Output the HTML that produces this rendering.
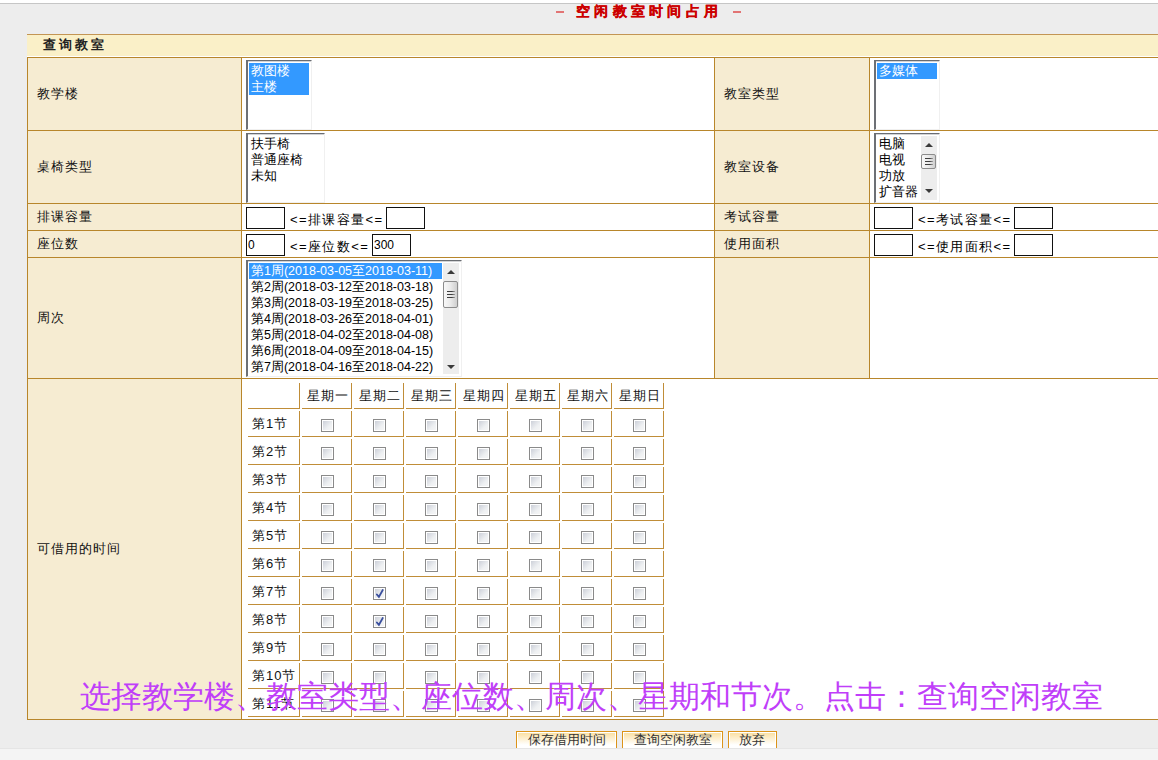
<!DOCTYPE html>
<html><head><meta charset="utf-8">
<style>
*{box-sizing:border-box;margin:0;padding:0}
html,body{width:1158px;height:760px;overflow:hidden}
body{position:relative;background:#ededed;font-family:"Liberation Sans",sans-serif;font-size:12px;color:#000}
.lt,.txt,.th,.tr,.btn{-webkit-text-stroke:0px currentColor}
.title{-webkit-text-stroke:0.3px currentColor}
.a{position:absolute}
.topw{left:0;top:0;width:1158px;height:3px;background:#fff}
.topl{left:0;top:3px;width:1158px;height:1px;background:#c6c6c6}
.bot{left:0;top:748px;width:1158px;height:12px;background:#f4f4f4;border-top:1px solid #e5e5e5}
.title{top:4px;height:14px;line-height:14px;font-size:14px;font-weight:bold;color:#cc0000;letter-spacing:4.3px;white-space:nowrap}
.dash{top:11px;width:8px;height:2px;background:#e27474}
.hdr{left:27px;top:34px;width:1140px;height:22px;border-top:1px solid #c39554;background:#faf0c8}
.hdrt{left:43px;top:38px;line-height:14px;font-size:13px;font-weight:bold;letter-spacing:3px;color:#222}
.hl{height:1px;background:#b8862b}
.vl{width:1px;background:#b8862b}
.lab{background:#f6ecd2}
.wht{background:#fff}
.lt{display:flex;align-items:center;font-size:13px;letter-spacing:1px;white-space:nowrap;color:#111}
.sel{background:#fff;border-top:1px solid #6a6d72;box-shadow:inset 0 1px 0 #d2d3d5;border-left:2px solid #6d7075;border-right:1px solid #f0f0f0;border-bottom:1px solid #f0f0f0;overflow:hidden}
.opt{height:16px;line-height:16px;font-size:12.5px;padding-left:2px;white-space:nowrap}
.on{background:#3399ff;color:#fff}
.inp{width:39px;height:22px;border:1px solid #111;background:#fff;line-height:20px;padding-left:1px;font-size:12px}
.txt{font-size:13px;letter-spacing:1.4px;white-space:nowrap;line-height:14px}
.opts{position:absolute;left:1px;top:2px}
.sb{background:#ededed}
.up{width:0;height:0;border-left:4px solid transparent;border-right:4px solid transparent;border-bottom:4px solid #3a3a3a}
.dn{width:0;height:0;border-left:4px solid transparent;border-right:4px solid transparent;border-top:4px solid #3a3a3a}
.thumb{border:1px solid #8c8c8c;border-radius:2px;background:linear-gradient(90deg,#f8f8f8 0%,#eaeaea 50%,#cfcfcf 100%)}
.grip{position:absolute;left:3px;top:50%;margin-top:-4px;width:8px;height:8px;background:linear-gradient(#3e3e3e 0,#3e3e3e 1.5px,transparent 1.5px,transparent 3px,#3e3e3e 3px,#3e3e3e 4.5px,transparent 4.5px,transparent 6px,#3e3e3e 6px,#3e3e3e 7.5px,transparent 7.5px);-webkit-mask-image:linear-gradient(90deg,#000 60%,rgba(0,0,0,.35))}
.tc{height:26px;border-right:1px solid #c08d38;border-bottom:1px solid #c08d38;white-space:nowrap}
.th{text-align:center;line-height:25px;font-size:13px;letter-spacing:1px;padding-left:2px;color:#111}
.tr{line-height:26px;font-size:13px;letter-spacing:1px;padding-left:4px;color:#111}
.cb{width:13px;height:13px;border:1px solid #8e8e8e;background:linear-gradient(135deg,#c6cad4,#eef0f2 60%,#f7f7f7);box-shadow:inset 0 0 0 1px #fff;border-color:#8a8a8a}
.btn{height:17px;overflow:hidden;border:1px solid #dc9419;border-bottom:none;background:linear-gradient(#fff 0,#fff 1px,#fbe1a4 1px,#fff 80%);box-shadow:inset 1px 0 0 #fff,inset -1px 0 0 #fff;text-align:center;line-height:15px;color:#333;font-size:13px}
.purple{font-size:31px;line-height:40px;color:#c03ef9;white-space:nowrap}
</style></head><body>
<div class="a topw"></div>
<div class="a topl"></div>
<div class="a dash" style="left:556px"></div>
<div class="a title" style="left:576px">空闲教室时间占用</div>
<div class="a dash" style="left:733px"></div>

<div class="a hdr"></div>
<div class="a" style="left:27px;top:56px;width:1140px;height:1px;background:#fff"></div>
<div class="a hdrt">查询教室</div>

<!-- table backgrounds -->
<div class="a lab" style="left:28px;top:58px;width:213px;height:661px"></div>
<div class="a wht" style="left:242px;top:58px;width:472px;height:320px"></div>
<div class="a lab" style="left:715px;top:58px;width:154px;height:320px"></div>
<div class="a wht" style="left:870px;top:58px;width:300px;height:320px"></div>
<div class="a wht" style="left:242px;top:379px;width:930px;height:340px"></div>

<!-- grid lines -->
<div class="a hl" style="left:27px;top:57px;width:1140px"></div>
<div class="a hl" style="left:27px;top:130px;width:1140px"></div>
<div class="a hl" style="left:27px;top:203px;width:1140px"></div>
<div class="a hl" style="left:27px;top:230px;width:1140px"></div>
<div class="a hl" style="left:27px;top:257px;width:1140px"></div>
<div class="a hl" style="left:27px;top:378px;width:1140px"></div>
<div class="a hl" style="left:27px;top:719px;width:1140px"></div>
<div class="a vl" style="left:27px;top:57px;height:663px"></div>
<div class="a vl" style="left:241px;top:57px;height:663px"></div>
<div class="a vl" style="left:714px;top:57px;height:322px"></div>
<div class="a vl" style="left:869px;top:57px;height:322px"></div>

<!-- labels -->
<div class="a lt" style="left:37px;top:58px;height:72px">教学楼</div>
<div class="a lt" style="left:37px;top:131px;height:72px">桌椅类型</div>
<div class="a lt" style="left:37px;top:204px;height:26px">排课容量</div>
<div class="a lt" style="left:37px;top:231px;height:26px">座位数</div>
<div class="a lt" style="left:37px;top:258px;height:120px">周次</div>
<div class="a lt" style="left:37px;top:379px;height:340px">可借用的时间</div>
<div class="a lt" style="left:724px;top:58px;height:72px">教室类型</div>
<div class="a lt" style="left:724px;top:131px;height:72px">教室设备</div>
<div class="a lt" style="left:724px;top:204px;height:26px">考试容量</div>
<div class="a lt" style="left:724px;top:231px;height:26px">使用面积</div>


<!-- selects -->
<div class="a sel" style="left:246px;top:60px;width:66px;height:70px"><div class="opts" style="width:60px"><div class="opt on">教图楼</div><div class="opt on">主楼</div></div></div>
<div class="a sel" style="left:874px;top:60px;width:66px;height:70px"><div class="opts" style="width:60px"><div class="opt on">多媒体</div></div></div>
<div class="a sel" style="left:246px;top:133px;width:79px;height:70px"><div class="opts" style="width:73px"><div class="opt">扶手椅</div><div class="opt">普通座椅</div><div class="opt">未知</div></div></div>
<div class="a sel" style="left:874px;top:133px;width:66px;height:70px"><div class="opts" style="width:44px"><div class="opt">电脑</div><div class="opt">电视</div><div class="opt">功放</div><div class="opt">扩音器</div></div>
 <div class="a sb" style="left:45px;top:2px;width:16px;height:64px"><div class="a up" style="left:4px;top:7px"></div><div class="a thumb" style="left:0px;top:18px;width:15px;height:15px"><div class="grip"></div></div><div class="a dn" style="left:4px;top:53px"></div></div></div>
<div class="a sel" style="left:246px;top:260px;width:216px;height:117px"><div class="opts" style="width:193px"><div class="opt on">第1周(2018-03-05至2018-03-11)</div><div class="opt">第2周(2018-03-12至2018-03-18)</div><div class="opt">第3周(2018-03-19至2018-03-25)</div><div class="opt">第4周(2018-03-26至2018-04-01)</div><div class="opt">第5周(2018-04-02至2018-04-08)</div><div class="opt">第6周(2018-04-09至2018-04-15)</div><div class="opt">第7周(2018-04-16至2018-04-22)</div></div>
 <div class="a sb" style="left:195px;top:2px;width:16px;height:111px"><div class="a up" style="left:4px;top:7px"></div><div class="a thumb" style="left:0px;top:18px;width:15px;height:27px"><div class="grip"></div></div><div class="a dn" style="left:4px;top:102px"></div></div></div>

<!-- inputs -->
<div class="a inp" style="left:246px;top:207px"></div>
<div class="a txt" style="left:290px;top:213px">&lt;=排课容量&lt;=</div>
<div class="a inp" style="left:386px;top:207px"></div>
<div class="a inp" style="left:874px;top:207px"></div>
<div class="a txt" style="left:918px;top:213px">&lt;=考试容量&lt;=</div>
<div class="a inp" style="left:1014px;top:207px"></div>
<div class="a inp" style="left:246px;top:234px">0</div>
<div class="a txt" style="left:290px;top:240px">&lt;=座位数&lt;=</div>
<div class="a inp" style="left:372px;top:234px">300</div>
<div class="a inp" style="left:874px;top:234px"></div>
<div class="a txt" style="left:918px;top:240px">&lt;=使用面积&lt;=</div>
<div class="a inp" style="left:1014px;top:234px"></div>

<!-- timetable -->
<div class="a tc" style="left:248px;top:383px;width:52px"></div>
<div class="a tc th" style="left:302px;top:383px;width:50px">星期一</div>
<div class="a tc th" style="left:354px;top:383px;width:50px">星期二</div>
<div class="a tc th" style="left:406px;top:383px;width:50px">星期三</div>
<div class="a tc th" style="left:458px;top:383px;width:50px">星期四</div>
<div class="a tc th" style="left:510px;top:383px;width:50px">星期五</div>
<div class="a tc th" style="left:562px;top:383px;width:50px">星期六</div>
<div class="a tc th" style="left:614px;top:383px;width:50px">星期日</div>
<div class="a tc tr" style="left:248px;top:411px;width:52px">第1节</div>
<div class="a tc" style="left:302px;top:411px;width:50px"></div>
<div class="a cb" style="left:321px;top:419px"></div>
<div class="a tc" style="left:354px;top:411px;width:50px"></div>
<div class="a cb" style="left:373px;top:419px"></div>
<div class="a tc" style="left:406px;top:411px;width:50px"></div>
<div class="a cb" style="left:425px;top:419px"></div>
<div class="a tc" style="left:458px;top:411px;width:50px"></div>
<div class="a cb" style="left:477px;top:419px"></div>
<div class="a tc" style="left:510px;top:411px;width:50px"></div>
<div class="a cb" style="left:529px;top:419px"></div>
<div class="a tc" style="left:562px;top:411px;width:50px"></div>
<div class="a cb" style="left:581px;top:419px"></div>
<div class="a tc" style="left:614px;top:411px;width:50px"></div>
<div class="a cb" style="left:633px;top:419px"></div>
<div class="a tc tr" style="left:248px;top:439px;width:52px">第2节</div>
<div class="a tc" style="left:302px;top:439px;width:50px"></div>
<div class="a cb" style="left:321px;top:447px"></div>
<div class="a tc" style="left:354px;top:439px;width:50px"></div>
<div class="a cb" style="left:373px;top:447px"></div>
<div class="a tc" style="left:406px;top:439px;width:50px"></div>
<div class="a cb" style="left:425px;top:447px"></div>
<div class="a tc" style="left:458px;top:439px;width:50px"></div>
<div class="a cb" style="left:477px;top:447px"></div>
<div class="a tc" style="left:510px;top:439px;width:50px"></div>
<div class="a cb" style="left:529px;top:447px"></div>
<div class="a tc" style="left:562px;top:439px;width:50px"></div>
<div class="a cb" style="left:581px;top:447px"></div>
<div class="a tc" style="left:614px;top:439px;width:50px"></div>
<div class="a cb" style="left:633px;top:447px"></div>
<div class="a tc tr" style="left:248px;top:467px;width:52px">第3节</div>
<div class="a tc" style="left:302px;top:467px;width:50px"></div>
<div class="a cb" style="left:321px;top:475px"></div>
<div class="a tc" style="left:354px;top:467px;width:50px"></div>
<div class="a cb" style="left:373px;top:475px"></div>
<div class="a tc" style="left:406px;top:467px;width:50px"></div>
<div class="a cb" style="left:425px;top:475px"></div>
<div class="a tc" style="left:458px;top:467px;width:50px"></div>
<div class="a cb" style="left:477px;top:475px"></div>
<div class="a tc" style="left:510px;top:467px;width:50px"></div>
<div class="a cb" style="left:529px;top:475px"></div>
<div class="a tc" style="left:562px;top:467px;width:50px"></div>
<div class="a cb" style="left:581px;top:475px"></div>
<div class="a tc" style="left:614px;top:467px;width:50px"></div>
<div class="a cb" style="left:633px;top:475px"></div>
<div class="a tc tr" style="left:248px;top:495px;width:52px">第4节</div>
<div class="a tc" style="left:302px;top:495px;width:50px"></div>
<div class="a cb" style="left:321px;top:503px"></div>
<div class="a tc" style="left:354px;top:495px;width:50px"></div>
<div class="a cb" style="left:373px;top:503px"></div>
<div class="a tc" style="left:406px;top:495px;width:50px"></div>
<div class="a cb" style="left:425px;top:503px"></div>
<div class="a tc" style="left:458px;top:495px;width:50px"></div>
<div class="a cb" style="left:477px;top:503px"></div>
<div class="a tc" style="left:510px;top:495px;width:50px"></div>
<div class="a cb" style="left:529px;top:503px"></div>
<div class="a tc" style="left:562px;top:495px;width:50px"></div>
<div class="a cb" style="left:581px;top:503px"></div>
<div class="a tc" style="left:614px;top:495px;width:50px"></div>
<div class="a cb" style="left:633px;top:503px"></div>
<div class="a tc tr" style="left:248px;top:523px;width:52px">第5节</div>
<div class="a tc" style="left:302px;top:523px;width:50px"></div>
<div class="a cb" style="left:321px;top:531px"></div>
<div class="a tc" style="left:354px;top:523px;width:50px"></div>
<div class="a cb" style="left:373px;top:531px"></div>
<div class="a tc" style="left:406px;top:523px;width:50px"></div>
<div class="a cb" style="left:425px;top:531px"></div>
<div class="a tc" style="left:458px;top:523px;width:50px"></div>
<div class="a cb" style="left:477px;top:531px"></div>
<div class="a tc" style="left:510px;top:523px;width:50px"></div>
<div class="a cb" style="left:529px;top:531px"></div>
<div class="a tc" style="left:562px;top:523px;width:50px"></div>
<div class="a cb" style="left:581px;top:531px"></div>
<div class="a tc" style="left:614px;top:523px;width:50px"></div>
<div class="a cb" style="left:633px;top:531px"></div>
<div class="a tc tr" style="left:248px;top:551px;width:52px">第6节</div>
<div class="a tc" style="left:302px;top:551px;width:50px"></div>
<div class="a cb" style="left:321px;top:559px"></div>
<div class="a tc" style="left:354px;top:551px;width:50px"></div>
<div class="a cb" style="left:373px;top:559px"></div>
<div class="a tc" style="left:406px;top:551px;width:50px"></div>
<div class="a cb" style="left:425px;top:559px"></div>
<div class="a tc" style="left:458px;top:551px;width:50px"></div>
<div class="a cb" style="left:477px;top:559px"></div>
<div class="a tc" style="left:510px;top:551px;width:50px"></div>
<div class="a cb" style="left:529px;top:559px"></div>
<div class="a tc" style="left:562px;top:551px;width:50px"></div>
<div class="a cb" style="left:581px;top:559px"></div>
<div class="a tc" style="left:614px;top:551px;width:50px"></div>
<div class="a cb" style="left:633px;top:559px"></div>
<div class="a tc tr" style="left:248px;top:579px;width:52px">第7节</div>
<div class="a tc" style="left:302px;top:579px;width:50px"></div>
<div class="a cb" style="left:321px;top:587px"></div>
<div class="a tc" style="left:354px;top:579px;width:50px"></div>
<div class="a cb" style="left:373px;top:587px"><svg class="a" style="left:0;top:0" width="11" height="11" viewBox="0 0 11 11"><path d="M2.9 6.5 L4.9 8.9 L8.7 2.1" fill="none" stroke="#3a4f9e" stroke-width="1.9" stroke-linecap="round"/></svg></div>
<div class="a tc" style="left:406px;top:579px;width:50px"></div>
<div class="a cb" style="left:425px;top:587px"></div>
<div class="a tc" style="left:458px;top:579px;width:50px"></div>
<div class="a cb" style="left:477px;top:587px"></div>
<div class="a tc" style="left:510px;top:579px;width:50px"></div>
<div class="a cb" style="left:529px;top:587px"></div>
<div class="a tc" style="left:562px;top:579px;width:50px"></div>
<div class="a cb" style="left:581px;top:587px"></div>
<div class="a tc" style="left:614px;top:579px;width:50px"></div>
<div class="a cb" style="left:633px;top:587px"></div>
<div class="a tc tr" style="left:248px;top:607px;width:52px">第8节</div>
<div class="a tc" style="left:302px;top:607px;width:50px"></div>
<div class="a cb" style="left:321px;top:615px"></div>
<div class="a tc" style="left:354px;top:607px;width:50px"></div>
<div class="a cb" style="left:373px;top:615px"><svg class="a" style="left:0;top:0" width="11" height="11" viewBox="0 0 11 11"><path d="M2.9 6.5 L4.9 8.9 L8.7 2.1" fill="none" stroke="#3a4f9e" stroke-width="1.9" stroke-linecap="round"/></svg></div>
<div class="a tc" style="left:406px;top:607px;width:50px"></div>
<div class="a cb" style="left:425px;top:615px"></div>
<div class="a tc" style="left:458px;top:607px;width:50px"></div>
<div class="a cb" style="left:477px;top:615px"></div>
<div class="a tc" style="left:510px;top:607px;width:50px"></div>
<div class="a cb" style="left:529px;top:615px"></div>
<div class="a tc" style="left:562px;top:607px;width:50px"></div>
<div class="a cb" style="left:581px;top:615px"></div>
<div class="a tc" style="left:614px;top:607px;width:50px"></div>
<div class="a cb" style="left:633px;top:615px"></div>
<div class="a tc tr" style="left:248px;top:635px;width:52px">第9节</div>
<div class="a tc" style="left:302px;top:635px;width:50px"></div>
<div class="a cb" style="left:321px;top:643px"></div>
<div class="a tc" style="left:354px;top:635px;width:50px"></div>
<div class="a cb" style="left:373px;top:643px"></div>
<div class="a tc" style="left:406px;top:635px;width:50px"></div>
<div class="a cb" style="left:425px;top:643px"></div>
<div class="a tc" style="left:458px;top:635px;width:50px"></div>
<div class="a cb" style="left:477px;top:643px"></div>
<div class="a tc" style="left:510px;top:635px;width:50px"></div>
<div class="a cb" style="left:529px;top:643px"></div>
<div class="a tc" style="left:562px;top:635px;width:50px"></div>
<div class="a cb" style="left:581px;top:643px"></div>
<div class="a tc" style="left:614px;top:635px;width:50px"></div>
<div class="a cb" style="left:633px;top:643px"></div>
<div class="a tc tr" style="left:248px;top:663px;width:52px">第10节</div>
<div class="a tc" style="left:302px;top:663px;width:50px"></div>
<div class="a cb" style="left:321px;top:671px"></div>
<div class="a tc" style="left:354px;top:663px;width:50px"></div>
<div class="a cb" style="left:373px;top:671px"></div>
<div class="a tc" style="left:406px;top:663px;width:50px"></div>
<div class="a cb" style="left:425px;top:671px"></div>
<div class="a tc" style="left:458px;top:663px;width:50px"></div>
<div class="a cb" style="left:477px;top:671px"></div>
<div class="a tc" style="left:510px;top:663px;width:50px"></div>
<div class="a cb" style="left:529px;top:671px"></div>
<div class="a tc" style="left:562px;top:663px;width:50px"></div>
<div class="a cb" style="left:581px;top:671px"></div>
<div class="a tc" style="left:614px;top:663px;width:50px"></div>
<div class="a cb" style="left:633px;top:671px"></div>
<div class="a tc tr" style="left:248px;top:691px;width:52px">第11节</div>
<div class="a tc" style="left:302px;top:691px;width:50px"></div>
<div class="a cb" style="left:321px;top:699px"></div>
<div class="a tc" style="left:354px;top:691px;width:50px"></div>
<div class="a cb" style="left:373px;top:699px"></div>
<div class="a tc" style="left:406px;top:691px;width:50px"></div>
<div class="a cb" style="left:425px;top:699px"></div>
<div class="a tc" style="left:458px;top:691px;width:50px"></div>
<div class="a cb" style="left:477px;top:699px"></div>
<div class="a tc" style="left:510px;top:691px;width:50px"></div>
<div class="a cb" style="left:529px;top:699px"></div>
<div class="a tc" style="left:562px;top:691px;width:50px"></div>
<div class="a cb" style="left:581px;top:699px"></div>
<div class="a tc" style="left:614px;top:691px;width:50px"></div>
<div class="a cb" style="left:633px;top:699px"></div>

<!-- bottom -->
<div class="a bot"></div>
<div class="a btn" style="left:516px;top:731px;width:101px">保存借用时间</div>
<div class="a btn" style="left:622px;top:731px;width:101px">查询空闲教室</div>
<div class="a btn" style="left:728px;top:731px;width:49px;padding-right:2px">放弃</div>

<div class="a purple" style="left:80px;top:677px">选择教学楼、教室类型、座位数、周次、星期和节次。点击：查询空闲教室</div>


</body></html>
